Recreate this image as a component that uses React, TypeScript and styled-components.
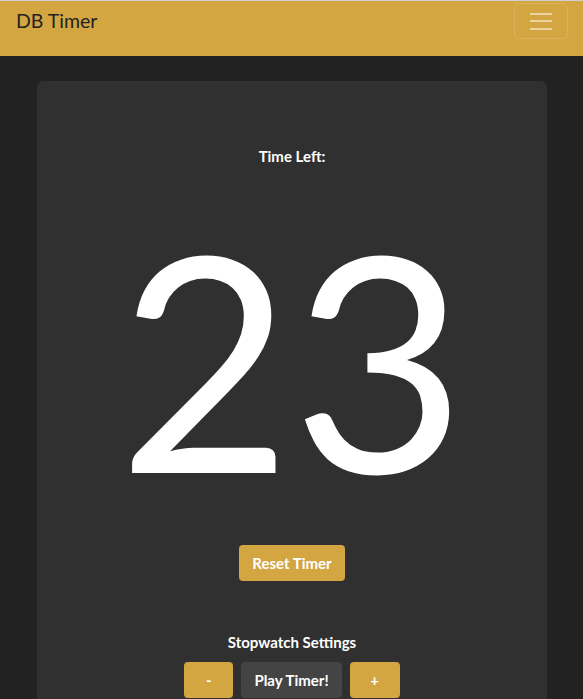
import React from "react";
import styled, { createGlobalStyle } from "styled-components";

const GOLD = "#d3a642";

const Global = createGlobalStyle`
  html, body { margin: 0; padding: 0; background: #222222; }
  body { font-family: Lato, "Open Sans", sans-serif; color: #ffffff; }
  * { box-sizing: border-box; }
`;

const Page = styled.div`
  min-height: 699px;
  background: #222222;
  border-top: 1px solid #cfcfcf;
`;

const NavBar = styled.nav`
  height: 55px;
  background: ${GOLD};
  display: flex;
  align-items: flex-start;
  justify-content: space-between;
  padding: 2px 15px 0 16px;
`;

const Brand = styled.div`
  font-family: Lato, sans-serif;
  font-size: 19.5px;
  line-height: 30px;
  margin-top: 3px;
  color: #222222;
`;

const Toggler = styled.button`
  width: 54px;
  height: 36px;
  border: 1px solid rgba(255, 255, 255, 0.14);
  border-radius: 5px;
  background: transparent;
  display: flex;
  flex-direction: column;
  align-items: center;
  justify-content: center;
  gap: 5.5px;
  padding: 0;
`;

const Bar = styled.span`
  display: block;
  width: 22px;
  height: 2px;
  background: rgba(255, 255, 255, 0.5);
`;

const Main = styled.main`
  padding: 25px 36px 0 37px;
`;

const Card = styled.section`
  background: #303030;
  border-radius: 6px;
  padding: 64px 0 60px;
  display: flex;
  flex-direction: column;
  align-items: center;
`;

const Label = styled.div<{ $gap?: number }>`
  font-family: Lato, sans-serif;
  font-weight: 700;
  font-size: 15px;
  line-height: 22.5px;
  color: #ffffff;
  margin-top: ${(p) => p.$gap ?? 0}px;
`;

const BigNumber = styled.div`
  font-family: Lato, sans-serif;
  font-weight: 400;
  font-size: 300px;
  line-height: 1;
  margin-top: 39px;
  color: #ffffff;
`;

const Button = styled.button<{ $variant?: "gold" | "dark"; $width?: number }>`
  font-family: Lato, sans-serif;
  font-weight: 700;
  font-size: 15px;
  line-height: 22px;
  color: #ffffff;
  border: none;
  border-radius: 4px;
  padding: ${(p) => (p.$width ? "7px 0" : "7px 13px")};
  width: ${(p) => (p.$width ? `${p.$width}px` : "auto")};
  background: ${(p) => (p.$variant === "dark" ? "#444444" : GOLD)};
  cursor: pointer;
`;

const ResetButton = styled(Button)`
  margin-top: 38px;
`;

const ButtonRow = styled.div`
  display: flex;
  gap: 8px;
  margin-top: 9px;
`;

export default function App() {
  return (
    <>
      <Global />
      <Page>
        <NavBar>
          <Brand>DB Timer</Brand>
          <Toggler aria-label="Toggle navigation">
            <Bar />
            <Bar />
            <Bar />
          </Toggler>
        </NavBar>
        <Main>
          <Card>
            <Label>Time Left:</Label>
            <BigNumber>23</BigNumber>
            <ResetButton $variant="gold">Reset Timer</ResetButton>
            <Label $gap={50}>Stopwatch Settings</Label>
            <ButtonRow>
              <Button $variant="gold" $width={49}>-</Button>
              <Button $variant="dark">Play Timer!</Button>
              <Button $variant="gold" $width={50}>+</Button>
            </ButtonRow>
          </Card>
        </Main>
      </Page>
    </>
  );
}
